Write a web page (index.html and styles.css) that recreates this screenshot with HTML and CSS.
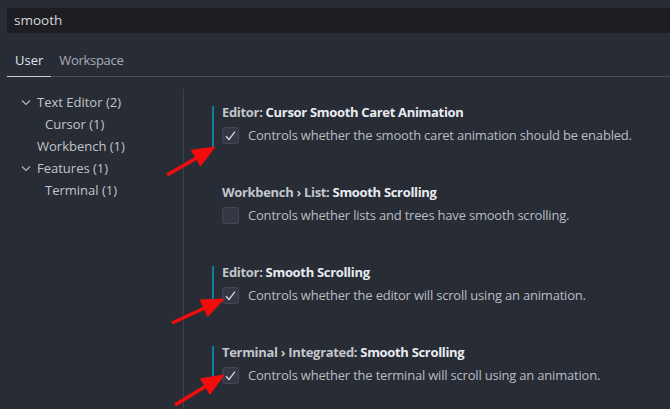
FILE: index.html
```html
<!DOCTYPE html>
<html>
<head>
<meta charset="utf-8">
<link rel="stylesheet" href="styles.css">
</head>
<body>
<div class="search">smooth</div>
<div class="tabs">
  <div class="tab active">User</div>
  <div class="tab">Workspace</div>
</div>
<div class="main">
  <div class="tree">
    <div class="row"><svg class="chev" width="16" height="10" viewBox="0 0 16 10"><path d="M1 2.5 L5 6.5 L9 2.5" fill="none" stroke="#b8bcc2" stroke-width="1.1"/></svg>Text Editor (2)</div>
    <div class="row nested">Cursor (1)</div>
    <div class="row plain">Workbench (1)</div>
    <div class="row"><svg class="chev" width="16" height="10" viewBox="0 0 16 10"><path d="M1 2.5 L5 6.5 L9 2.5" fill="none" stroke="#b8bcc2" stroke-width="1.1"/></svg>Features (1)</div>
    <div class="row nested">Terminal (1)</div>
  </div>
  <div class="list">
    <div class="setting modified">
      <div class="title"><span class="cat">Editor: </span><span class="key">Cursor Smooth Caret Animation</span></div>
      <div class="body"><span class="box"><svg width="17" height="17" viewBox="0 0 17 17"><path d="M4 9.2 L7 12.4 L13 4.6" fill="none" stroke="#d6dbe2" stroke-width="1.3"/></svg></span><span class="desc">Controls whether the smooth caret animation should be enabled.</span></div>
    </div>
    <div class="setting">
      <div class="title"><span class="cat">Workbench › List: </span><span class="key">Smooth Scrolling</span></div>
      <div class="body"><span class="box"></span><span class="desc">Controls whether lists and trees have smooth scrolling.</span></div>
    </div>
    <div class="setting modified">
      <div class="title"><span class="cat">Editor: </span><span class="key">Smooth Scrolling</span></div>
      <div class="body"><span class="box"><svg width="17" height="17" viewBox="0 0 17 17"><path d="M4 9.2 L7 12.4 L13 4.6" fill="none" stroke="#d6dbe2" stroke-width="1.3"/></svg></span><span class="desc">Controls whether the editor will scroll using an animation.</span></div>
    </div>
    <div class="setting modified">
      <div class="title"><span class="cat">Terminal › Integrated: </span><span class="key">Smooth Scrolling</span></div>
      <div class="body"><span class="box"><svg width="17" height="17" viewBox="0 0 17 17"><path d="M4 9.2 L7 12.4 L13 4.6" fill="none" stroke="#d6dbe2" stroke-width="1.3"/></svg></span><span class="desc">Controls whether the terminal will scroll using an animation.</span></div>
    </div>
  </div>
</div>
<svg class="arrows" width="670" height="409" viewBox="0 0 670 409">
  <g fill="#f20c0c" stroke="#f20c0c">
    <line x1="167" y1="175" x2="200" y2="156" stroke-width="3.5"/>
    <polygon points="215,147 200.5,165.9 191.5,150.3" stroke-width="1"/>
    <line x1="172" y1="323" x2="208" y2="306.5" stroke-width="3.5"/>
    <polygon points="224,299 207.8,316.4 200.2,300" stroke-width="1"/>
    <line x1="175" y1="405" x2="209" y2="384.2" stroke-width="3.5"/>
    <polygon points="224,375 210,394.2 200.6,378.8" stroke-width="1"/>
  </g>
</svg>
</body>
</html>
```
FILE: styles.css
```css
html, body {
  margin: 0;
  padding: 0;
  background: #282c35;
  width: 670px;
  height: 409px;
  overflow: hidden;
  font-family: "Open Sans", "Noto Sans", sans-serif;
  font-size: 13px;
  color: #c4c6ca;
}
body { position: relative; }

.search {
  margin: 8px 0 0 7px;
  height: 25px;
  line-height: 25px;
  background: #1d1e23;
  padding-left: 7px;
  font-size: 13.5px;
  color: #d4d6da;
}

.tabs {
  margin-left: 7px;
  height: 43px;
  display: flex;
  align-items: flex-end;
  border-bottom: 1px solid #4a4d57;
}
.tab {
  padding: 0 8px 7px;
  line-height: 18px;
  color: #a8adb5;
  margin-bottom: -1px;
  border-bottom: 1px solid transparent;
  letter-spacing: -0.3px;
}
.tab.active {
  color: #dfe5ec;
  border-bottom-color: #c8ced6;
  letter-spacing: 0;
}

.main {
  display: flex;
  margin-top: 12px;
  height: 320px;
}
.tree {
  width: 184px;
  box-sizing: border-box;
  border-right: 1px solid #3d414b;
  padding-top: 2px;
}
.row {
  height: 22px;
  line-height: 22px;
  padding-left: 21px;
  display: flex;
  align-items: center;
  color: #c2c4c8;
  white-space: nowrap;
}
.row.nested { padding-left: 45px; }
.row.plain { padding-left: 37px; }
.chev { flex: none; margin-top: 1px; }

.list {
  padding-top: 17px;
}
.setting {
  margin-left: 28px;
  border-left: 2px solid transparent;
  padding: 0 0 3px 8px;
  margin-bottom: 39px;
}
.setting.modified { border-left-color: #0f7d9c; }
.title {
  line-height: 13px;
  font-weight: 700;
  white-space: nowrap;
  letter-spacing: -0.32px;
}
.cat { color: #c3c6cb; }
.key { color: #e8ecf0; }
.body {
  margin-top: 8px;
  display: flex;
  align-items: center;
  gap: 9px;
}
.box {
  width: 17px;
  height: 17px;
  box-sizing: border-box;
  border: 1px solid #434856;
  background: #343844;
  border-radius: 3px;
  display: block;
  flex: none;
}
.box svg { display: block; margin: -1px; }
.desc {
  color: #b8bcc3;
  white-space: nowrap;
  line-height: 17px;
  letter-spacing: -0.2px;
}

.arrows {
  position: absolute;
  left: 0;
  top: 0;
}
```
